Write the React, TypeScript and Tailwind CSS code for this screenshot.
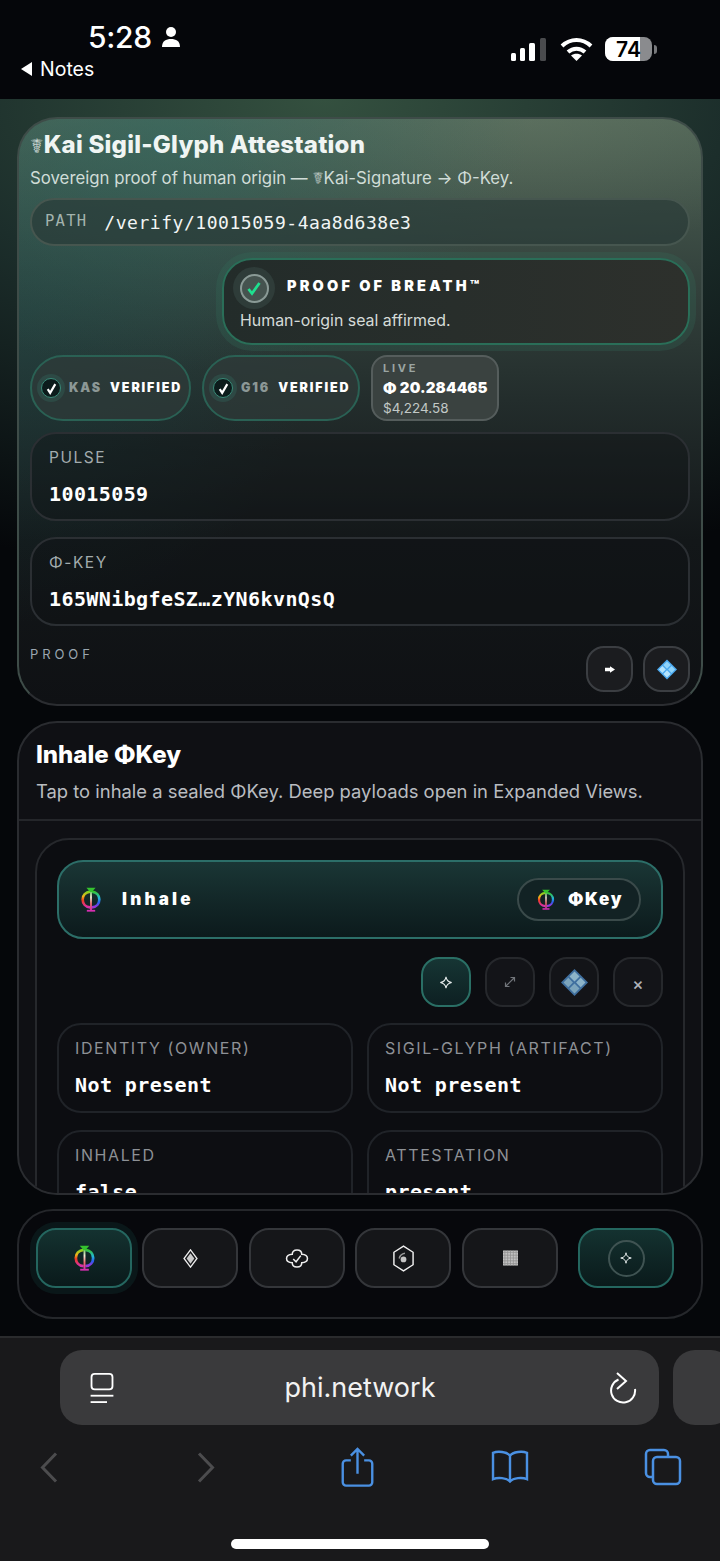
import React from "react";

const SANS = "font-['Inter','DejaVu_Sans',sans-serif]";
const MONO = "font-['DejaVu_Sans_Mono','Liberation_Mono',monospace]";

function PhiLogo({ id, w = 20, h = 25 }: { id: string; w?: number; h?: number }) {
  return (
    <svg width={w} height={h} viewBox="0 0 24 30" fill="none">
      <defs>
        <linearGradient id={`${id}l`} x1="0" y1="0" x2="0" y2="1">
          <stop offset="0" stopColor="#7ed321" />
          <stop offset="0.3" stopColor="#f2b21a" />
          <stop offset="0.55" stopColor="#ef3a22" />
          <stop offset="1" stopColor="#d62fb0" />
        </linearGradient>
        <linearGradient id={`${id}r`} x1="0" y1="0" x2="0" y2="1">
          <stop offset="0" stopColor="#35c22f" />
          <stop offset="0.4" stopColor="#22b8d6" />
          <stop offset="0.7" stopColor="#2b5bf0" />
          <stop offset="1" stopColor="#a52fd6" />
        </linearGradient>
        <linearGradient id={`${id}c`} gradientUnits="userSpaceOnUse" x1="12" y1="2" x2="12" y2="28">
          <stop offset="0" stopColor="#35c22f" />
          <stop offset="0.4" stopColor="#f4ead8" />
          <stop offset="0.7" stopColor="#f06a6a" />
          <stop offset="1" stopColor="#d62fb0" />
        </linearGradient>
      </defs>
      <path d="M11 5.500C5.500 6 2 10 2 15s3.500 9 9 9.500" stroke={`url(#${id}l)`} strokeWidth="3.200" />
      <path d="M13 5.500C18.500 6 22 10 22 15s-3.500 9-9 9.500" stroke={`url(#${id}r)`} strokeWidth="3.200" />
      <path d="M12 3v25" stroke={`url(#${id}c)`} strokeWidth="2.200" />
      <path d="M6.500 1h11l-4.500 5h-2z" fill="#35c22f" />
      <path d="M7 28.500h10" stroke="#d62fb0" strokeWidth="2.200" />
    </svg>
  );
}

function Crystal({ w = 19, h = 20, dim = false }: { w?: number; h?: number; dim?: boolean }) {
  const back = dim ? "#3f6f9f" : "#4aa8ee";
  const a = dim ? "#8db4c9" : "#8fd4fb";
  const b = dim ? "#7ca5bd" : "#b4e4fd";
  return (
    <svg width={w} height={h} viewBox="0 0 26 26">
      <path d="M13 0l13 13-13 13L0 13z" fill={back} />
      <path d="M13 2.500l4.800 4.800-4.800 4.800-4.800-4.800z" fill={a} />
      <path d="M7 8.500l4.500 4.500L7 17.500 2.500 13z" fill={b} />
      <path d="M19 8.500l4.500 4.500-4.500 4.500-4.500-4.500z" fill={a} />
      <path d="M13 13.900l4.800 4.800-4.800 4.800-4.800-4.800z" fill={b} />
    </svg>
  );
}

function Spark({ w = 14, h = 13 }: { w?: number; h?: number }) {
  return (
    <svg width={w} height={h} viewBox="0 0 16 16" fill="none" stroke="#e8eeee" strokeWidth="1.300">
      <path d="M8 1c.6 4.200 2.400 6.200 7 7-4.600.8-6.400 2.800-7 7-.6-4.200-2.400-6.200-7-7 4.600-.8 6.400-2.800 7-7z" />
    </svg>
  );
}

function SmallCheck() {
  return (
    <div className="w-[28px] h-[28px] rounded-full bg-[#2f5a52]/50 flex items-center justify-center shrink-0">
      <div className="w-[20px] h-[20px] rounded-full border border-[#3a8a78] bg-[#0c1c1c] flex items-center justify-center">
        <svg width="13" height="13" viewBox="0 0 12 12" fill="none">
          <path d="M2.500 6.500l2.300 3.500L9.500 2" stroke="#fff" strokeWidth="2" />
        </svg>
      </div>
    </div>
  );
}

function VerifiedPill({ name, w }: { name: string; w: string }) {
  return (
    <div className={`${w} h-[66px] rounded-[33px] border-2 border-[#2a6154] bg-[#2f3b39]/70 flex items-center pl-[5px]`}>
      <SmallCheck />
      <span className="ml-[4px] text-[12.500px] font-black tracking-[0.15em] text-[#8c9896]">{name}</span>
      <span className="ml-[8px] text-[12.500px] font-black tracking-[0.15em] text-white">VERIFIED</span>
    </div>
  );
}

function Field({ label, value }: { label: string; value: string }) {
  return (
    <div className="h-[89px] rounded-[26px] border-2 border-[#2b2f33] bg-[#0f1114]/40 px-[17px] pt-[14px]">
      <div className="text-[15.500px] leading-[20px] tracking-[0.1em] text-[#a3acae]">{label}</div>
      <div className={`${MONO} mt-[14px] text-[20px] leading-[24px] font-bold text-white tracking-[0.02em]`}>{value}</div>
    </div>
  );
}

function MiniField({ label, value }: { label: string; value: string }) {
  return (
    <div className="h-[90px] rounded-[24px] border-2 border-[#202328] bg-[#0d0e12] px-[16px] pt-[13px]">
      <div className="text-[16px] leading-[20px] tracking-[0.1em] text-[#8d9196] whitespace-nowrap">{label}</div>
      <div className={`${MONO} mt-[15px] text-[20px] leading-[24px] font-bold text-white tracking-[0.02em]`}>{value}</div>
    </div>
  );
}

function ActionBtn({ active, children }: { active?: boolean; children: React.ReactNode }) {
  return (
    <div
      className={`w-[50px] h-[50px] rounded-[18px] border-2 flex items-center justify-center ${
        active ? "border-[#2a6f65] bg-gradient-to-b from-[#163534] to-[#0d2022]" : "border-[#26282c] bg-[#131418]"
      }`}
    >
      {children}
    </div>
  );
}

function NavBtn({ active, children, className = "" }: { active?: boolean; children: React.ReactNode; className?: string }) {
  return (
    <div
      className={`w-[96px] h-[60px] rounded-[20px] border-2 flex items-center justify-center shrink-0 ${className} ${
        active
          ? "border-[#24665f] bg-gradient-to-b from-[#143230] to-[#0a1a1b]"
          : "border-[#34363a] bg-[#151619]"
      }`}
    >
      {children}
    </div>
  );
}

export default function App() {
  return (
    <div className={`${SANS} w-[720px] h-[1561px] overflow-hidden flex flex-col bg-[#05060a] text-white`}>
      {/* status bar */}
      <div className="h-[99px] shrink-0 bg-[#05060a] flex justify-between pl-[21px] pr-[63px]">
        <div>
          <div className="flex items-center gap-[10px] ml-[67px] mt-[19px]">
            <span className="text-[30px] leading-[36px] font-medium tracking-[-0.01em]">5:28</span>
            <svg width="18" height="20" viewBox="0 0 18 20" fill="#fff">
              <circle cx="9" cy="5" r="5" />
              <path d="M0 20c0-6 4-8 9-8s9 2 9 8z" />
            </svg>
          </div>
          <div className="flex items-center gap-[7px] mt-[2px]">
            <svg width="12" height="14" viewBox="0 0 12 14" fill="#fff"><path d="M11 0v14L0 7z" /></svg>
            <span className="text-[19.500px] leading-[24px]">Notes</span>
          </div>
        </div>
        <div className="flex items-center gap-[14px] h-[40px] self-start mt-[29px]">
          <svg width="36" height="23" viewBox="0 0 36 23">
            <rect x="1" y="15" width="5" height="8" rx="1.500" fill="#fff" />
            <rect x="10" y="10" width="5" height="13" rx="1.500" fill="#fff" />
            <rect x="19" y="5" width="6" height="18" rx="1.500" fill="#fff" />
            <rect x="30" y="0" width="6" height="23" rx="1.500" fill="#4a4b4e" />
          </svg>
          <svg width="33" height="24" viewBox="0 0 33 24" fill="none" stroke="#fff" strokeWidth="4">
            <path d="M2 9c8.500-8 20.500-8 29 0" />
            <path d="M8 15c5-4.500 12-4.500 17 0" />
            <path d="M16.500 24l-5.500-5.500c3-2.500 8-2.500 11 0z" fill="#fff" stroke="none" />
          </svg>
          <div className="flex items-center ml-[-2px]">
            <div className="relative w-[47px] h-[24px] rounded-[8px] bg-[#8a8b8e] overflow-hidden flex items-center justify-center">
              <div className="absolute left-0 top-0 bottom-0 w-[35px] bg-white" />
              <span className="relative text-[21px] font-semibold text-black leading-none">74</span>
            </div>
            <div className="w-[3px] h-[9px] ml-[2px] rounded-r-full bg-[#77787b]" />
          </div>
        </div>
      </div>

      {/* page */}
      <div className="h-[1237px] shrink-0 overflow-hidden px-[17px] pt-[18px] flex flex-col gap-[15px] bg-[radial-gradient(ellipse_900px_480px_at_45%_0%,#34503f_0%,#1c2e2b_45%,#05070a_100%)]">
        {/* attestation card */}
        <div className="h-[589px] shrink-0 rounded-[40px] border-2 border-[#3e4c48] border-b-[#2b2d31] px-[11px] pt-[9px] bg-[radial-gradient(ellipse_360px_240px_at_22%_2%,rgba(50,108,98,0.55)_0%,rgba(50,108,98,0)_100%),radial-gradient(ellipse_300px_300px_at_0%_35%,rgba(24,72,72,0.4)_0%,rgba(24,72,72,0)_100%),radial-gradient(ellipse_320px_130px_at_75%_0%,rgba(110,130,108,0.35)_0%,rgba(110,130,108,0)_100%),linear-gradient(180deg,#506456_0%,#36453f_25%,#232d2c_48%,#131719_72%,#0f1114_100%)]">
          <div className="text-[24px] leading-[34px] font-extrabold tracking-[0.01em] text-[#f0f5f3] whitespace-nowrap">
            <span className="text-[20px] text-[#c6d2cf]">☤</span>Kai Sigil-Glyph Attestation
          </div>
          <div className="text-[16.800px] leading-[24px] mt-[3px] text-[#d0dcd7] whitespace-nowrap">
            Sovereign proof of human origin — <span className="text-[#b4c2bd]">☤</span>Kai-Signature → Φ-Key.
          </div>
          <div className="h-[48px] mt-[8px] rounded-full border-2 border-[#46564f] bg-[#2a3a37]/70 flex items-center pl-[13px]">
            <span className={`${MONO} text-[15.500px] tracking-[0.08em] text-[#a3b3ad]`}>PATH</span>
            <span className={`${MONO} ml-[17px] text-[18px] tracking-[0.03em] text-[#f2f5f4]`}>/verify/10015059-4aa8d638e3</span>
          </div>

          <div className="flex justify-end mt-[12px]">
            <div className="w-[468px] h-[87px] rounded-[30px] border-2 border-[#2a6e58] bg-gradient-to-r from-[#232c2a] to-[#2d302c] shadow-[0_0_0_6px_rgba(50,110,90,0.25)] px-[16px]">
              <div className="flex items-center gap-[12px] mt-[7px]">
                <div className="w-[42px] h-[42px] -ml-[7px] rounded-full bg-[#3a4b47]/50 flex items-center justify-center">
                  <div className="w-[29px] h-[29px] rounded-full border-2 border-[#8a9a96] bg-[#45534f] flex items-center justify-center">
                    <svg width="16" height="16" viewBox="0 0 16 16" fill="none">
                      <path d="M2.500 9l3.500 4.500L13.500 3" stroke="#1ee08f" strokeWidth="2.800" />
                    </svg>
                  </div>
                </div>
                <span className="text-[14.500px] -mt-[4px] font-black tracking-[0.22em] text-white whitespace-nowrap">PROOF OF BREATH™</span>
              </div>
              <div className="text-[15.900px] leading-[20px] mt-[2px] text-[#d5dbd8]">Human-origin seal affirmed.</div>
            </div>
          </div>

          <div className="flex gap-[11px] mt-[10px]">
            <VerifiedPill name="KAS" w="w-[161px]" />
            <VerifiedPill name="G16" w="w-[158px]" />
            <div className="w-[128px] h-[66px] rounded-[16px] border-2 border-[#555d5c] bg-[#3a4240] px-[10px] pt-[5px]">
              <div className="text-[11px] leading-[13px] font-bold tracking-[0.25em] text-[#9aa5a2]">LIVE</div>
              <div className="text-[15px] leading-[20px] mt-[3px] font-black tracking-[0.01em] text-white whitespace-nowrap">Φ 20.284465</div>
              <div className="text-[13.500px] leading-[16px] mt-[2px] text-[#c2c9c7]">$4,224.58</div>
            </div>
          </div>

          <div className="flex flex-col gap-[16px] mt-[11px]">
            <Field label="PULSE" value="10015059" />
            <Field label="Φ-KEY" value="165WNibgfeSZ…zYN6kvnQsQ" />
          </div>

          <div className="flex justify-between mt-[20px]">
            <span className="text-[13px] leading-[16px] tracking-[0.3em] text-[#9aa6b0]">PROOF</span>
            <div className="flex gap-[10px]">
              <div className="w-[47px] h-[46px] rounded-[18px] border-2 border-[#3b3e42] bg-[#1b1c1f] flex items-center justify-center">
                <svg width="10" height="7" viewBox="0 0 12 8" fill="#fff"><path d="M0 2h6V0l6 4-6 4V6H0z" /></svg>
              </div>
              <div className="w-[47px] h-[46px] rounded-[18px] border-2 border-[#3b3e42] bg-[#1b1c1f] flex items-center justify-center">
                <Crystal w={20} h={21} />
              </div>
            </div>
          </div>
        </div>

        {/* inhale card */}
        <div className="h-[474px] shrink-0 overflow-hidden rounded-[40px] border-2 border-[#2a2c30] bg-[#0f1014]">
          <div className="h-[98px] border-b-2 border-[#24262a] px-[17px] pt-[15px]">
            <div className="text-[24px] leading-[34px] font-extrabold text-white">Inhale ΦKey</div>
            <div className="text-[18.400px] leading-[26px] mt-[6px] text-[#b9bcc0] whitespace-nowrap">Tap to inhale a sealed ΦKey. Deep payloads open in Expanded Views.</div>
          </div>
          <div className="mx-[16px] mt-[17px] h-[500px] rounded-[34px] border-2 border-[#26282c] bg-[#0c0d11] px-[20px] pt-[20px]">
            <div className="h-[79px] rounded-[26px] border-2 border-[#2c6e68] bg-gradient-to-b from-[#1a3635] to-[#0c1a1c] flex items-center justify-between pl-[22px] pr-[20px]">
              <div className="flex items-center gap-[21px]">
                <PhiLogo id="phi1" w={20} h={25} />
                <span className="text-[17px] font-black tracking-[0.19em] text-white">Inhale</span>
              </div>
              <div className="w-[124px] h-[43px] rounded-full border-2 border-[#3a4a4a] bg-[#122224] flex items-center gap-[13px] pl-[18px]">
                <PhiLogo id="phi2" w={18} h={21} />
                <span className="text-[17px] font-black tracking-[0.1em] text-white">ΦKey</span>
              </div>
            </div>

            <div className="flex justify-end gap-[14px] mt-[18px]">
              <ActionBtn active><Spark /></ActionBtn>
              <ActionBtn>
                <svg width="14" height="14" viewBox="0 0 14 14" fill="none" stroke="#71757a" strokeWidth="1.200">
                  <path d="M3 11l8-8M7.500 2.500H11.500V6.500M2.500 7.500v4h4" />
                </svg>
              </ActionBtn>
              <ActionBtn><Crystal w={27} h={27} dim /></ActionBtn>
              <ActionBtn><span className="text-[17px] font-medium text-[#b0b3b8] mt-[6px]">×</span></ActionBtn>
            </div>

            <div className="grid grid-cols-2 gap-x-[14px] gap-y-[17px] mt-[16px]">
              <MiniField label="IDENTITY (OWNER)" value="Not present" />
              <MiniField label="SIGIL-GLYPH (ARTIFACT)" value="Not present" />
              <MiniField label="INHALED" value="false" />
              <MiniField label="ATTESTATION" value="present" />
            </div>
          </div>
        </div>

        {/* bottom nav */}
        <div className="h-[110px] -mt-px shrink-0 rounded-[36px] border-2 border-[#25272b] bg-[#07080c] pl-[17px] pt-[17px] flex">
          <NavBtn active className="shadow-[0_0_0_6px_rgba(20,60,55,0.3)]"><PhiLogo id="phi3" w={23} h={26} /></NavBtn>
          <div className="flex gap-[10.700px] ml-[10px]">
            <NavBtn>
              <svg width="17" height="19" viewBox="0 0 18 22" fill="none">
                <path d="M9 1l7.500 10L9 21 1.500 11z" stroke="#eee" strokeWidth="1.500" />
                <path d="M9 5l4.500 6L9 17l-4.500-6z" fill="#c9c9c9" />
              </svg>
            </NavBtn>
            <NavBtn>
              <svg width="24" height="19" viewBox="0 0 24 20" fill="none" stroke="#eee" strokeWidth="1.600">
                <path d="M12 1c3.500 0 5 2 5 4.500 3 .2 6 1.500 6 4.500s-3 4.300-6 4.500c0 2.500-1.500 4.500-5 4.500s-5-2-5-4.500C4 14.300 1 13 1 10s3-4.300 6-4.500C7 3 8.500 1 12 1z" />
                <path d="M8 10.500l3 3 5-6.500" />
              </svg>
            </NavBtn>
            <NavBtn>
              <svg width="23" height="27" viewBox="0 0 24 28" fill="none" stroke="#f0f0f0" strokeWidth="1.500">
                <path d="M12 1l10 6.500v13L12 27 2 20.500v-13z" />
                <circle cx="12" cy="15" r="3" fill="#c4c4c4" stroke="none" />
                <path d="M7.500 14c.6-3 3-5 6-5.500" stroke="#999" />
              </svg>
            </NavBtn>
            <NavBtn>
              <svg width="15" height="16" viewBox="0 0 16 16" stroke="#8f8f8f" strokeWidth="0.800">
                <rect x="0" y="0" width="16" height="16" fill="#c2c2c2" stroke="none" />
                <path d="M2 0v16M5 0v16M8 0v16M11 0v16M14 0v16M0 2h16M0 5h16M0 8h16M0 11h16M0 14h16" />
              </svg>
            </NavBtn>
          </div>
          <NavBtn active className="ml-[20px]">
            <div className="w-[37px] h-[37px] rounded-full border-2 border-[#3f5352] flex items-center justify-center">
              <Spark w={12} h={12} />
            </div>
          </NavBtn>
        </div>
      </div>

      {/* safari chrome */}
      <div className="flex-1 relative border-t-2 border-[#2a2b2d] bg-[#19191b]">
        <div className="flex mt-[12px] gap-[14px] pl-[60px]">
          <div className="w-[599px] h-[75px] rounded-[22px] bg-[#3a3a3c] flex items-center justify-between pl-[29px] pr-[22px] shrink-0">
            <svg width="26" height="31" viewBox="0 0 27 34" fill="none" stroke="#fff" strokeWidth="2">
              <rect x="2" y="2" width="23" height="17" rx="3.500" />
              <path d="M1 26h25" />
              <path d="M1 33h18" />
            </svg>
            <span className="text-[27px] leading-[36px] mr-[4px] text-[#f2f2f2]">phi.network</span>
            <svg width="28" height="32" viewBox="0 0 28 32" fill="none" stroke="#fff" strokeWidth="2">
              <path d="M9.500 7.500A12 12 0 1 0 26 17" />
              <path d="M8 1l9 8-9 8" />
            </svg>
          </div>
          <div className="w-[60px] h-[75px] rounded-[22px] bg-[#3a3a3c] shrink-0" />
        </div>
        <div className="flex items-start mt-[27px] h-[40px]">
          <svg className="ml-[40px]" width="18" height="31" viewBox="0 0 18 31" fill="none" stroke="#4c4c4e" strokeWidth="3">
            <path d="M16 1.500L2.500 15.500 16 29.500" />
          </svg>
          <svg className="ml-[139px]" width="18" height="31" viewBox="0 0 18 31" fill="none" stroke="#4c4c4e" strokeWidth="3">
            <path d="M2 1.500l13.500 14L2 29.500" />
          </svg>
          <svg className="ml-[126px] -mt-[5px]" width="33" height="40" viewBox="0 0 34 42" fill="none" stroke="#4a90e2" strokeWidth="2.500">
            <path d="M10 14H5a3.500 3.500 0 0 0-3.500 3.500V37A3.500 3.500 0 0 0 5 40.500h24a3.500 3.500 0 0 0 3.500-3.500V17.500A3.500 3.500 0 0 0 29 14h-5" />
            <path d="M17 28V2M10 9l7-7 7 7" />
          </svg>
          <svg className="ml-[116px] -mt-[2px]" width="40" height="33" viewBox="0 0 40 34" fill="none" stroke="#4a90e2" strokeWidth="2.500">
            <path d="M20 6C17 1.500 7 1 2.500 3v27c5-2 14-1.500 17.500 2.500 3.500-4 12.500-4.500 17.500-2.500V3C33 1 23 1.500 20 6zM20 6v26" />
          </svg>
          <svg className="ml-[114px] -mt-[4px]" width="38" height="38" viewBox="0 0 38 38" fill="none" stroke="#4a90e2" strokeWidth="2.500">
            <path d="M8 29H6a4 4 0 0 1-4-4V6a4 4 0 0 1 4-4h14a4 4 0 0 1 4 4v2" />
            <rect x="9" y="9" width="27" height="27" rx="4" />
          </svg>
        </div>
        <div className="absolute left-[231px] bottom-[12px] w-[258px] h-[10px] rounded-full bg-white" />
      </div>
    </div>
  );
}
